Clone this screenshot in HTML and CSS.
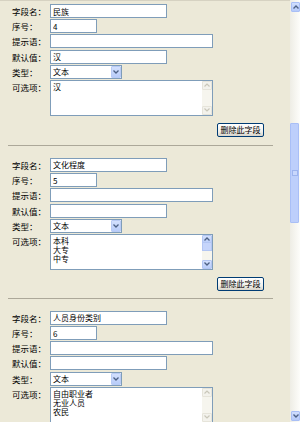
FILE: index.html
```html
<!DOCTYPE html>
<html lang="zh-CN">
<head>
    <meta charset="UTF-8">
    <meta name="viewport" content="width=device-width, initial-scale=1.0">
    <title>字段设置</title>
    <link rel="stylesheet" href="styles.css">
</head>
<body>
    <div class="page">
        <div class="content">
            <div class="section first">
                <div class="rows">
                    <span class="label">字段名：</span>
                    <input class="box w-m" type="text" value="民族">
                    <span class="label">序号：</span>
                    <input class="box w-s" type="text" value="4">
                    <span class="label">提示语：</span>
                    <input class="box w-l" type="text" value="">
                    <span class="label">默认值：</span>
                    <input class="box w-m" type="text" value="汉">
                    <span class="label">类型：</span>
                    <div class="select">
                        <span class="select-text">文本</span>
                        <span class="drop"><svg width="6" height="4" viewBox="0 0 6 4"><polyline points="0.5,0.5 3,3 5.5,0.5" fill="none" stroke="#4D6185" stroke-width="1.3"/></svg></span>
                    </div>
                    <span class="label">可选项：</span>
                    <div class="area">
                        <div class="area-text">汉</div>
                        <div class="vscroll">
                            <span class="sbtn off"><svg width="6" height="4" viewBox="0 0 6 4"><polyline points="0.5,3.5 3,1 5.5,3.5" fill="none" stroke="#C9C7BA" stroke-width="1.2"/></svg></span>
                            <span class="sbtn off"><svg width="6" height="4" viewBox="0 0 6 4"><polyline points="0.5,0.5 3,3 5.5,0.5" fill="none" stroke="#C9C7BA" stroke-width="1.2"/></svg></span>
                        </div>
                    </div>
                </div>
                <div class="actions"><button class="del" type="button">删除此字段</button></div>
            </div>

            <div class="section">
                <div class="rows">
                    <span class="label">字段名：</span>
                    <input class="box w-m" type="text" value="文化程度">
                    <span class="label">序号：</span>
                    <input class="box w-s" type="text" value="5">
                    <span class="label">提示语：</span>
                    <input class="box w-l" type="text" value="">
                    <span class="label">默认值：</span>
                    <input class="box w-m" type="text" value="">
                    <span class="label">类型：</span>
                    <div class="select">
                        <span class="select-text">文本</span>
                        <span class="drop"><svg width="6" height="4" viewBox="0 0 6 4"><polyline points="0.5,0.5 3,3 5.5,0.5" fill="none" stroke="#4D6185" stroke-width="1.3"/></svg></span>
                    </div>
                    <span class="label">可选项：</span>
                    <div class="area">
                        <div class="area-text">本科<br>大专<br>中专</div>
                        <div class="vscroll">
                            <span class="sbtn"><svg width="6" height="4" viewBox="0 0 6 4"><polyline points="0.5,3.5 3,1 5.5,3.5" fill="none" stroke="#4D6185" stroke-width="1.3"/></svg></span>
                            <span class="sthumb"></span>
                            <span class="sbtn"><svg width="6" height="4" viewBox="0 0 6 4"><polyline points="0.5,0.5 3,3 5.5,0.5" fill="none" stroke="#4D6185" stroke-width="1.3"/></svg></span>
                        </div>
                    </div>
                </div>
                <div class="actions"><button class="del" type="button">删除此字段</button></div>
            </div>

            <div class="section">
                <div class="rows">
                    <span class="label">字段名：</span>
                    <input class="box w-m" type="text" value="人员身份类别">
                    <span class="label">序号：</span>
                    <input class="box w-s" type="text" value="6">
                    <span class="label">提示语：</span>
                    <input class="box w-l" type="text" value="">
                    <span class="label">默认值：</span>
                    <input class="box w-m" type="text" value="">
                    <span class="label">类型：</span>
                    <div class="select">
                        <span class="select-text">文本</span>
                        <span class="drop"><svg width="6" height="4" viewBox="0 0 6 4"><polyline points="0.5,0.5 3,3 5.5,0.5" fill="none" stroke="#4D6185" stroke-width="1.3"/></svg></span>
                    </div>
                    <span class="label">可选项：</span>
                    <div class="area">
                        <div class="area-text">自由职业者<br>无业人员<br>农民</div>
                        <div class="vscroll">
                            <span class="sbtn off"><svg width="6" height="4" viewBox="0 0 6 4"><polyline points="0.5,3.5 3,1 5.5,3.5" fill="none" stroke="#C9C7BA" stroke-width="1.2"/></svg></span>
                            <span class="sbtn off"><svg width="6" height="4" viewBox="0 0 6 4"><polyline points="0.5,0.5 3,3 5.5,0.5" fill="none" stroke="#C9C7BA" stroke-width="1.2"/></svg></span>
                        </div>
                    </div>
                </div>
            </div>
        </div>

        <div class="scrollbar">
            <span class="pbtn"><svg width="6" height="4" viewBox="0 0 6 4"><polyline points="0.5,3.5 3,1 5.5,3.5" fill="none" stroke="#4D6185" stroke-width="1.4"/></svg></span>
            <span class="pthumb"><span class="grip"></span></span>
            <span class="pbtn bottom"><svg width="6" height="4" viewBox="0 0 6 4"><polyline points="0.5,0.5 3,3 5.5,0.5" fill="none" stroke="#4D6185" stroke-width="1.4"/></svg></span>
        </div>
    </div>
</body>
</html>
```

FILE: styles.css
```css
body {
    margin: 0;
    background-color: #ECE9D8;
    font-family: "Noto Sans CJK SC", sans-serif;
    color: #000;
    overflow: hidden;
}
.page {
    display: flex;
    height: 422px;
}
.content {
    flex: 1;
    border-top: 1px solid #D6D2C2;
    overflow: hidden;
}
.section {
    margin: 0 17px 0 8px;
    padding: 12px 9px 7px 4px;
    border-bottom: 1px solid #ACA899;
}
.section.first {
    padding-top: 3px;
    padding-bottom: 8px;
}
.rows {
    display: grid;
    grid-template-columns: 38px auto;
    row-gap: 1.2px;
    justify-items: start;
}
.label {
    font-size: 8.5px;
    line-height: 14px;
    white-space: nowrap;
}
.box {
    box-sizing: border-box;
    height: 14px;
    margin: 0;
    border: 1px solid #7F9DB9;
    background: #fff;
    padding: 0 2px;
    font-family: inherit;
    font-size: 8px;
    line-height: 12px;
    color: #000;
}
.w-s { width: 47px; }
.w-m { width: 117px; }
.w-l { width: 163px; }
.select {
    box-sizing: border-box;
    width: 72px;
    height: 14px;
    border: 1px solid #7F9DB9;
    background: #fff;
    display: flex;
    align-items: stretch;
    font-size: 8px;
}
.select-text {
    flex: 1;
    padding-left: 2px;
    line-height: 12px;
}
.drop {
    box-sizing: border-box;
    width: 10px;
    border: 1px solid #B9CBF5;
    border-radius: 1px;
    background: linear-gradient(#D3E0FD, #B8CCF9);
    display: flex;
    align-items: center;
    justify-content: center;
}
.area {
    box-sizing: border-box;
    width: 163px;
    height: 36px;
    border: 1px solid #7F9DB9;
    background: #fff;
    display: flex;
}
.area-text {
    flex: 1;
    padding: 1px 2px;
    font-size: 8px;
    line-height: 9px;
}
.vscroll {
    width: 10px;
    background: #F6F5EE;
    display: flex;
    flex-direction: column;
    justify-content: space-between;
}
.sbtn {
    box-sizing: border-box;
    height: 9px;
    border: 1px solid #B3C6F3;
    border-radius: 1px;
    background: linear-gradient(#D3E0FD, #B8CCF9);
    display: flex;
    align-items: center;
    justify-content: center;
}
.sbtn.off {
    border-color: #E6E4DA;
    background: #F3F2EC;
}
.sthumb {
    box-sizing: border-box;
    height: 9px;
    margin-top: -2px;
    margin-bottom: auto;
    border: 1px solid #B3C6F3;
    background: #C6D5FB;
}
.actions {
    display: flex;
    justify-content: flex-end;
    margin-top: 7px;
}
.del {
    box-sizing: border-box;
    width: 47px;
    height: 14px;
    padding: 0;
    border: 1px solid #003C74;
    border-radius: 2px;
    background: linear-gradient(#FFFFFF, #F2F1EC 60%, #D8D4C9);
    font-family: inherit;
    font-size: 8px;
    line-height: 12px;
    color: #000;
}
.scrollbar {
    width: 10px;
    background: linear-gradient(to right, #EEEDE5, #FDFDFA);
    display: flex;
    flex-direction: column;
    align-items: flex-start;
}
.pbtn {
    box-sizing: border-box;
    width: 9px;
    height: 10px;
    margin: 2px 0 0 1px;
    border: 1px solid #A9BFF6;
    border-radius: 1px;
    background: linear-gradient(#D0DEFD, #B6CAF9);
    display: flex;
    align-items: center;
    justify-content: center;
}
.pbtn.bottom {
    margin: auto 0 1px 1px;
}
.pthumb {
    box-sizing: border-box;
    width: 9px;
    height: 100px;
    margin-top: 111px;
    border: 1px solid #A9BFF6;
    border-radius: 1px;
    background: #BDCFFB;
    display: flex;
    align-items: center;
    justify-content: center;
}
.grip {
    width: 4px;
    height: 4px;
    border: 1px solid #9DB4EE;
    background: #C8D7FC;
}
```
